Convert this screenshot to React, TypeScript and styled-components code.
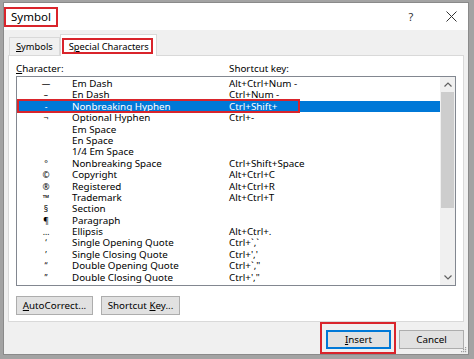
import React from "react";
import styled, { createGlobalStyle } from "styled-components";

const RED = "#d9242b";
const BLUE = "#0078d7";

interface CharRow {
  symbol: string;
  name: string;
  keys: string;
}

const rows: CharRow[] = [
  { symbol: "—", name: "Em Dash", keys: "Alt+Ctrl+Num -" },
  { symbol: "–", name: "En Dash", keys: "Ctrl+Num -" },
  { symbol: "-", name: "Nonbreaking Hyphen", keys: "Ctrl+Shift+" },
  { symbol: "¬", name: "Optional Hyphen", keys: "Ctrl+-" },
  { symbol: "", name: "Em Space", keys: "" },
  { symbol: "", name: "En Space", keys: "" },
  { symbol: "", name: "1/4 Em Space", keys: "" },
  { symbol: "°", name: "Nonbreaking Space", keys: "Ctrl+Shift+Space" },
  { symbol: "©", name: "Copyright", keys: "Alt+Ctrl+C" },
  { symbol: "®", name: "Registered", keys: "Alt+Ctrl+R" },
  { symbol: "™", name: "Trademark", keys: "Alt+Ctrl+T" },
  { symbol: "§", name: "Section", keys: "" },
  { symbol: "¶", name: "Paragraph", keys: "" },
  { symbol: "…", name: "Ellipsis", keys: "Alt+Ctrl+." },
  { symbol: "‘", name: "Single Opening Quote", keys: "Ctrl+`,`" },
  { symbol: "’", name: "Single Closing Quote", keys: "Ctrl+','" },
  { symbol: "“", name: "Double Opening Quote", keys: "Ctrl+`,\"" },
  { symbol: "”", name: "Double Closing Quote", keys: "Ctrl+',\"" },
];

const SELECTED = 2;

function Chevron({ up }: { up?: boolean }) {
  return (
    <svg width="8" height="5" viewBox="0 0 8 5">
      <polyline
        points={up ? "0.5,4.5 4,1 7.5,4.5" : "0.5,0.5 4,4 7.5,0.5"}
        fill="none"
        stroke="#606060"
        strokeWidth="1.2"
      />
    </svg>
  );
}

function App() {
  return (
    <>
      <GlobalStyle />
      <Dialog>
        <TitleBar>
          <TitleMark>Symbol</TitleMark>
          <TitleTools>
            <TitleButton>?</TitleButton>
            <TitleButton>
              <svg width="11" height="11" viewBox="0 0 11 11">
                <path d="M0.5 0.5 L10.5 10.5 M10.5 0.5 L0.5 10.5" stroke="#333" strokeWidth="1" />
              </svg>
            </TitleButton>
          </TitleTools>
        </TitleBar>

        <Body>
          <TabRow>
            <Tab>
              <u>S</u>ymbols
            </Tab>
            <Tab $active>
              <TabMark>
                S<u>p</u>ecial Characters
              </TabMark>
            </Tab>
          </TabRow>

          <Panel>
            <Header>
              <span>
                <u>C</u>haracter:
              </span>
              <span>Shortcut key:</span>
            </Header>
            <ListBox>
              <Rows>
                {rows.map((row, i) => (
                  <Row key={row.name} $selected={i === SELECTED}>
                    <SymbolCell>{row.symbol}</SymbolCell>
                    <span>{row.name}</span>
                    <span>{row.keys}</span>
                    {i === SELECTED && <RowMark />}
                  </Row>
                ))}
              </Rows>
              <Scrollbar>
                <ScrollArrow>
                  <Chevron up />
                </ScrollArrow>
                <ScrollTrack>
                  <ScrollThumb />
                </ScrollTrack>
                <ScrollArrow>
                  <Chevron />
                </ScrollArrow>
              </Scrollbar>
            </ListBox>
            <ListButtons>
              <Button $width={77}>
                <u>A</u>utoCorrect...
              </Button>
              <Button $width={79}>
                Shortcut <u>K</u>ey...
              </Button>
            </ListButtons>
          </Panel>

          <Footer>
            <ButtonMark>
              <Button $width={65} $default>
                <u>I</u>nsert
              </Button>
            </ButtonMark>
            <CancelButton $width={65}>Cancel</CancelButton>
          </Footer>
        </Body>
        <Grip width="6" height="6" viewBox="0 0 6 6">
          <rect x="4" y="0" width="1.2" height="1.2" fill="#9a9a9a" />
          <rect x="2" y="2" width="1.2" height="1.2" fill="#9a9a9a" />
          <rect x="4" y="2" width="1.2" height="1.2" fill="#9a9a9a" />
          <rect x="0" y="4" width="1.2" height="1.2" fill="#9a9a9a" />
          <rect x="2" y="4" width="1.2" height="1.2" fill="#9a9a9a" />
          <rect x="4" y="4" width="1.2" height="1.2" fill="#9a9a9a" />
        </Grip>
      </Dialog>
    </>
  );
}

const GlobalStyle = createGlobalStyle`
  html, body {
    margin: 0;
    padding: 0;
  }
  body {
    width: 474px;
    height: 359px;
    overflow: hidden;
    background: #a3a3a3;
    font-family: "Segoe UI", "Noto Sans", sans-serif;
    color: #000;
  }
  u {
    text-decoration-thickness: 1px;
    text-underline-offset: 1px;
  }
`;

const Dialog = styled.div`
  position: relative;
  box-sizing: border-box;
  margin: 2px 0 0 3px;
  width: 466px;
  height: 353px;
  background: #f0f0f0;
  border: 1px solid #8a8a8a;
  display: flex;
  flex-direction: column;
`;

const TitleBar = styled.div`
  height: 27px;
  background: #fff;
  display: flex;
  align-items: center;
`;

const TitleMark = styled.div`
  box-sizing: border-box;
  width: 54px;
  height: 20px;
  display: flex;
  align-items: center;
  padding: 0 0 0 5px;
  border: 2px solid ${RED};
  font-size: 11.5px;
`;

const TitleTools = styled.div`
  margin-left: auto;
  margin-right: 2px;
  display: flex;
  gap: 10px;
`;

const TitleButton = styled.div`
  width: 30px;
  height: 22px;
  display: flex;
  align-items: center;
  justify-content: center;
  font-size: 11px;
  color: #333;
`;

const Body = styled.div`
  flex: 1;
  display: flex;
  flex-direction: column;
  padding: 4px 4px 0 4px;
`;

const TabRow = styled.div`
  height: 21px;
  display: flex;
  align-items: flex-end;
  padding-left: 1px;
`;

const Tab = styled.div<{ $active?: boolean }>`
  box-sizing: border-box;
  position: relative;
  z-index: ${(p) => (p.$active ? 1 : 0)};
  height: ${(p) => (p.$active ? "22px" : "18px")};
  margin-bottom: ${(p) => (p.$active ? "-1px" : "0")};
  padding: ${(p) => (p.$active ? "3px 3px 0 1px" : "0 6px 0 6px")};
  display: flex;
  align-items: ${(p) => (p.$active ? "flex-start" : "center")};
  background: ${(p) => (p.$active ? "#fff" : "#f0f0f0")};
  border: 1px solid #d9d9d9;
  border-bottom: none;
  font-size: 9.3px;
`;

const TabMark = styled.span`
  box-sizing: border-box;
  height: 16px;
  display: flex;
  align-items: center;
  padding: 0 2px 0 5px;
  border: 2px solid ${RED};
  white-space: pre;
`;

const Panel = styled.div`
  box-sizing: border-box;
  height: 267px;
  background: #fff;
  border: 1px solid #d9d9d9;
  padding: 6px 7px 0 7px;
`;

const Header = styled.div`
  display: grid;
  grid-template-columns: 213px 1fr;
  height: 14px;
  line-height: 13px;
  font-size: 9.8px;
`;

const ListBox = styled.div`
  box-sizing: border-box;
  height: 210px;
  border: 1px solid #828790;
  display: flex;
`;

const Rows = styled.div`
  flex: 1;
  padding-top: 1px;
`;

const Row = styled.div<{ $selected?: boolean }>`
  position: relative;
  display: grid;
  grid-template-columns: 55px 157px 1fr;
  height: 11.4px;
  line-height: 11.4px;
  font-size: 9.8px;
  white-space: pre;
  background: ${(p) => (p.$selected ? BLUE : "transparent")};
  color: ${(p) => (p.$selected ? "#fff" : "#000")};
`;

const SymbolCell = styled.span`
  padding-left: 3px;
  text-align: center;
  font-size: 8.5px;
`;

const RowMark = styled.span`
  position: absolute;
  left: 0;
  top: -1.5px;
  width: 283px;
  height: 14px;
  box-sizing: border-box;
  border: 2px solid ${RED};
`;

const Scrollbar = styled.div`
  width: 15px;
  background: #f0f0f0;
  display: flex;
  flex-direction: column;
`;

const ScrollArrow = styled.div`
  height: 15px;
  display: flex;
  align-items: center;
  justify-content: center;
`;

const ScrollTrack = styled.div`
  flex: 1;
  padding: 0 1px;
`;

const ScrollThumb = styled.div`
  height: 116px;
  background: #cdcdcd;
`;

const ListButtons = styled.div`
  margin-top: 10px;
  display: flex;
  gap: 8px;
`;

const Button = styled.div<{ $width: number; $default?: boolean }>`
  box-sizing: border-box;
  width: ${(p) => p.$width}px;
  height: 19px;
  display: flex;
  align-items: center;
  justify-content: center;
  background: #e1e1e1;
  border: 1px solid ${(p) => (p.$default ? BLUE : "#adadad")};
  box-shadow: ${(p) => (p.$default ? `inset 0 0 0 1px ${BLUE}` : "none")};
  font-size: 9.8px;
  white-space: pre;
`;

const Footer = styled.div`
  display: flex;
  justify-content: flex-end;
  align-items: flex-start;
  gap: 3px;
`;

const ButtonMark = styled.div`
  border: 2px solid ${RED};
  padding: 6px 3px 3px 4px;
`;

const CancelButton = styled(Button)`
  margin-top: 8px;
`;

const Grip = styled.svg`
  position: absolute;
  right: 1px;
  bottom: 1px;
`;

export default App;
